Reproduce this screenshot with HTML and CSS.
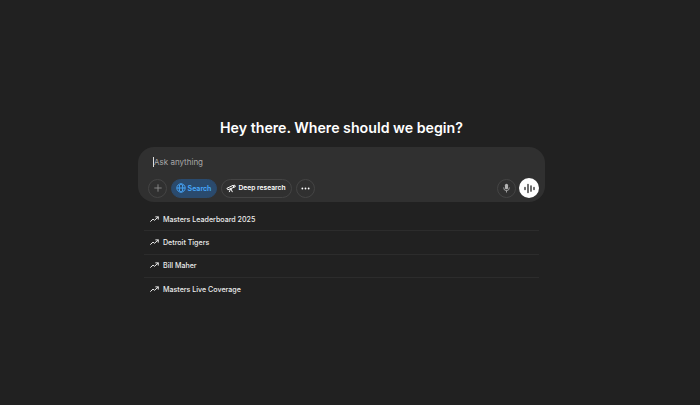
FILE: index.html
```html
<!DOCTYPE html>
<html lang="en">
<head>
    <meta charset="UTF-8">
    <meta name="viewport" content="width=device-width, initial-scale=1.0">
    <title>Hey there</title>
    <link rel="stylesheet" href="styles.css">
</head>
<body>
    <div class="container">
        <h1>Hey there. Where should we begin?</h1>

        <div class="composer">
            <div class="prompt"><span class="caret"></span>Ask anything</div>
            <div class="toolbar">
                <button class="round-btn plus">
                    <svg width="8" height="8" viewBox="0 0 9 9"><path d="M4.500 .8v7.400M.8 4.500h7.400" stroke="currentColor" stroke-width="1" stroke-linecap="round" fill="none"/></svg>
                </button>
                <button class="pill search">
                    <svg width="10" height="10" viewBox="0 0 12 12" fill="none" stroke="currentColor" stroke-width="1.100"><circle cx="6" cy="6" r="5"/><ellipse cx="6" cy="6" rx="2.200" ry="5"/><path d="M1 6h10"/></svg>
                    Search
                </button>
                <button class="pill deep">
                    <svg width="10" height="10" viewBox="0 0 12 12" fill="none" stroke="currentColor" stroke-width="1.200" stroke-linecap="round" stroke-linejoin="round"><path d="M1.500 6.200l7-3.400 1 2.400-6.800 2.800z"/><path d="M9 3.200l1.500-.6.700 1.800-1.500.6"/><path d="M5.500 7.200l-1.500 3.300M6 7l1.500 3.500"/></svg>
                    Deep research
                </button>
                <button class="round-btn more">
                    <svg width="9" height="9" viewBox="0 0 10 10" fill="currentColor"><circle cx="1.500" cy="5" r="1"/><circle cx="5" cy="5" r="1"/><circle cx="8.500" cy="5" r="1"/></svg>
                </button>
                <div class="spacer"></div>
                <button class="round-btn mic">
                    <svg width="9" height="10" viewBox="0 0 11 12" fill="none" stroke="currentColor" stroke-linecap="round"><rect x="3.600" y="0.800" width="3.800" height="6.800" rx="1.900" fill="currentColor" stroke="none"/><path d="M2 5.800a3.500 3.500 0 0 0 7 0M5.500 9.300v1.800"/></svg>
                </button>
                <button class="voice-btn">
                    <svg width="11" height="11" viewBox="0 0 11 11" fill="none" stroke="#212121" stroke-width="1.300" stroke-linecap="round"><path d="M1 4.500v2M4 1.500v8M7 2.800v5.400M10 4.500v2"/></svg>
                </button>
            </div>
        </div>

        <ul class="trends">
            <li><svg width="9" height="7" viewBox="0 0 11 8" fill="none" stroke="currentColor" stroke-width="1.200" stroke-linecap="round" stroke-linejoin="round"><path d="M.7 6.300l3-2.800 1.800 1.500L10 1M7 .8h3.100v2.800"/></svg>Masters Leaderboard 2025</li>
            <li><svg width="9" height="7" viewBox="0 0 11 8" fill="none" stroke="currentColor" stroke-width="1.200" stroke-linecap="round" stroke-linejoin="round"><path d="M.7 6.300l3-2.800 1.800 1.500L10 1M7 .8h3.100v2.800"/></svg>Detroit Tigers</li>
            <li><svg width="9" height="7" viewBox="0 0 11 8" fill="none" stroke="currentColor" stroke-width="1.200" stroke-linecap="round" stroke-linejoin="round"><path d="M.7 6.300l3-2.800 1.800 1.500L10 1M7 .8h3.100v2.800"/></svg>Bill Maher</li>
            <li><svg width="9" height="7" viewBox="0 0 11 8" fill="none" stroke="currentColor" stroke-width="1.200" stroke-linecap="round" stroke-linejoin="round"><path d="M.7 6.300l3-2.800 1.800 1.500L10 1M7 .8h3.100v2.800"/></svg>Masters Live Coverage</li>
        </ul>
    </div>
</body>
</html>
```
FILE: styles.css
```css
* {
    margin: 0;
    padding: 0;
    box-sizing: border-box;
}

body {
    font-family: Inter, "Liberation Sans", sans-serif;
    background: #212121;
    height: 405px;
    overflow: hidden;
    color: white;
}

.container {
    width: 407px;
    margin-left: 138px;
    padding-top: 118px;
}

h1 {
    font-size: 14.200px;
    line-height: 20px;
    font-weight: 600;
    text-align: center;
    color: #fff;
    margin-bottom: 9px;
}

.composer {
    background: #303030;
    border-radius: 16px;
    height: 55px;
    padding: 8px 6px 0 10px;
}

.prompt {
    display: flex;
    align-items: center;
    height: 14px;
    padding-left: 5px;
    font-size: 8px;
    color: #a8a8a8;
}

.caret {
    width: 1px;
    height: 10px;
    background: #ddd;
}

.toolbar {
    display: flex;
    align-items: center;
    gap: 4px;
    margin-top: 9px;
}

button {
    font-family: inherit;
    border: 1px solid #444;
    background: transparent;
    color: #fff;
    display: flex;
    align-items: center;
    justify-content: center;
}

.round-btn {
    width: 19px;
    height: 19px;
    border-radius: 50%;
}

.plus {
    color: #8e8e8e;
}

.mic {
    color: #b4b4b4;
    margin-right: -1px;
}

.pill {
    height: 19px;
    border-radius: 10px;
    gap: 2px;
    padding-right: 1px;
    font-size: 7px;
    font-weight: 600;
}

.search {
    width: 46px;
    background: #2a4a6d;
    border-color: #2a4a6d;
    color: #48aaff;
}

.deep {
    width: 71px;
    font-size: 6.700px;
}

.spacer {
    flex: 1;
}

.voice-btn {
    width: 20px;
    height: 20px;
    border-radius: 50%;
    background: #fff;
    border: 0;
}

.trends {
    list-style: none;
    margin: 6px 6px 0 6px;
}

.trends li {
    display: flex;
    align-items: center;
    gap: 4px;
    height: 23.300px;
    padding-left: 6px;
    font-size: 7.100px;
    font-weight: 500;
    color: #ececec;
    border-bottom: 1px solid #2c2c2c;
}

.trends li:last-child {
    border-bottom: 0;
}
```
